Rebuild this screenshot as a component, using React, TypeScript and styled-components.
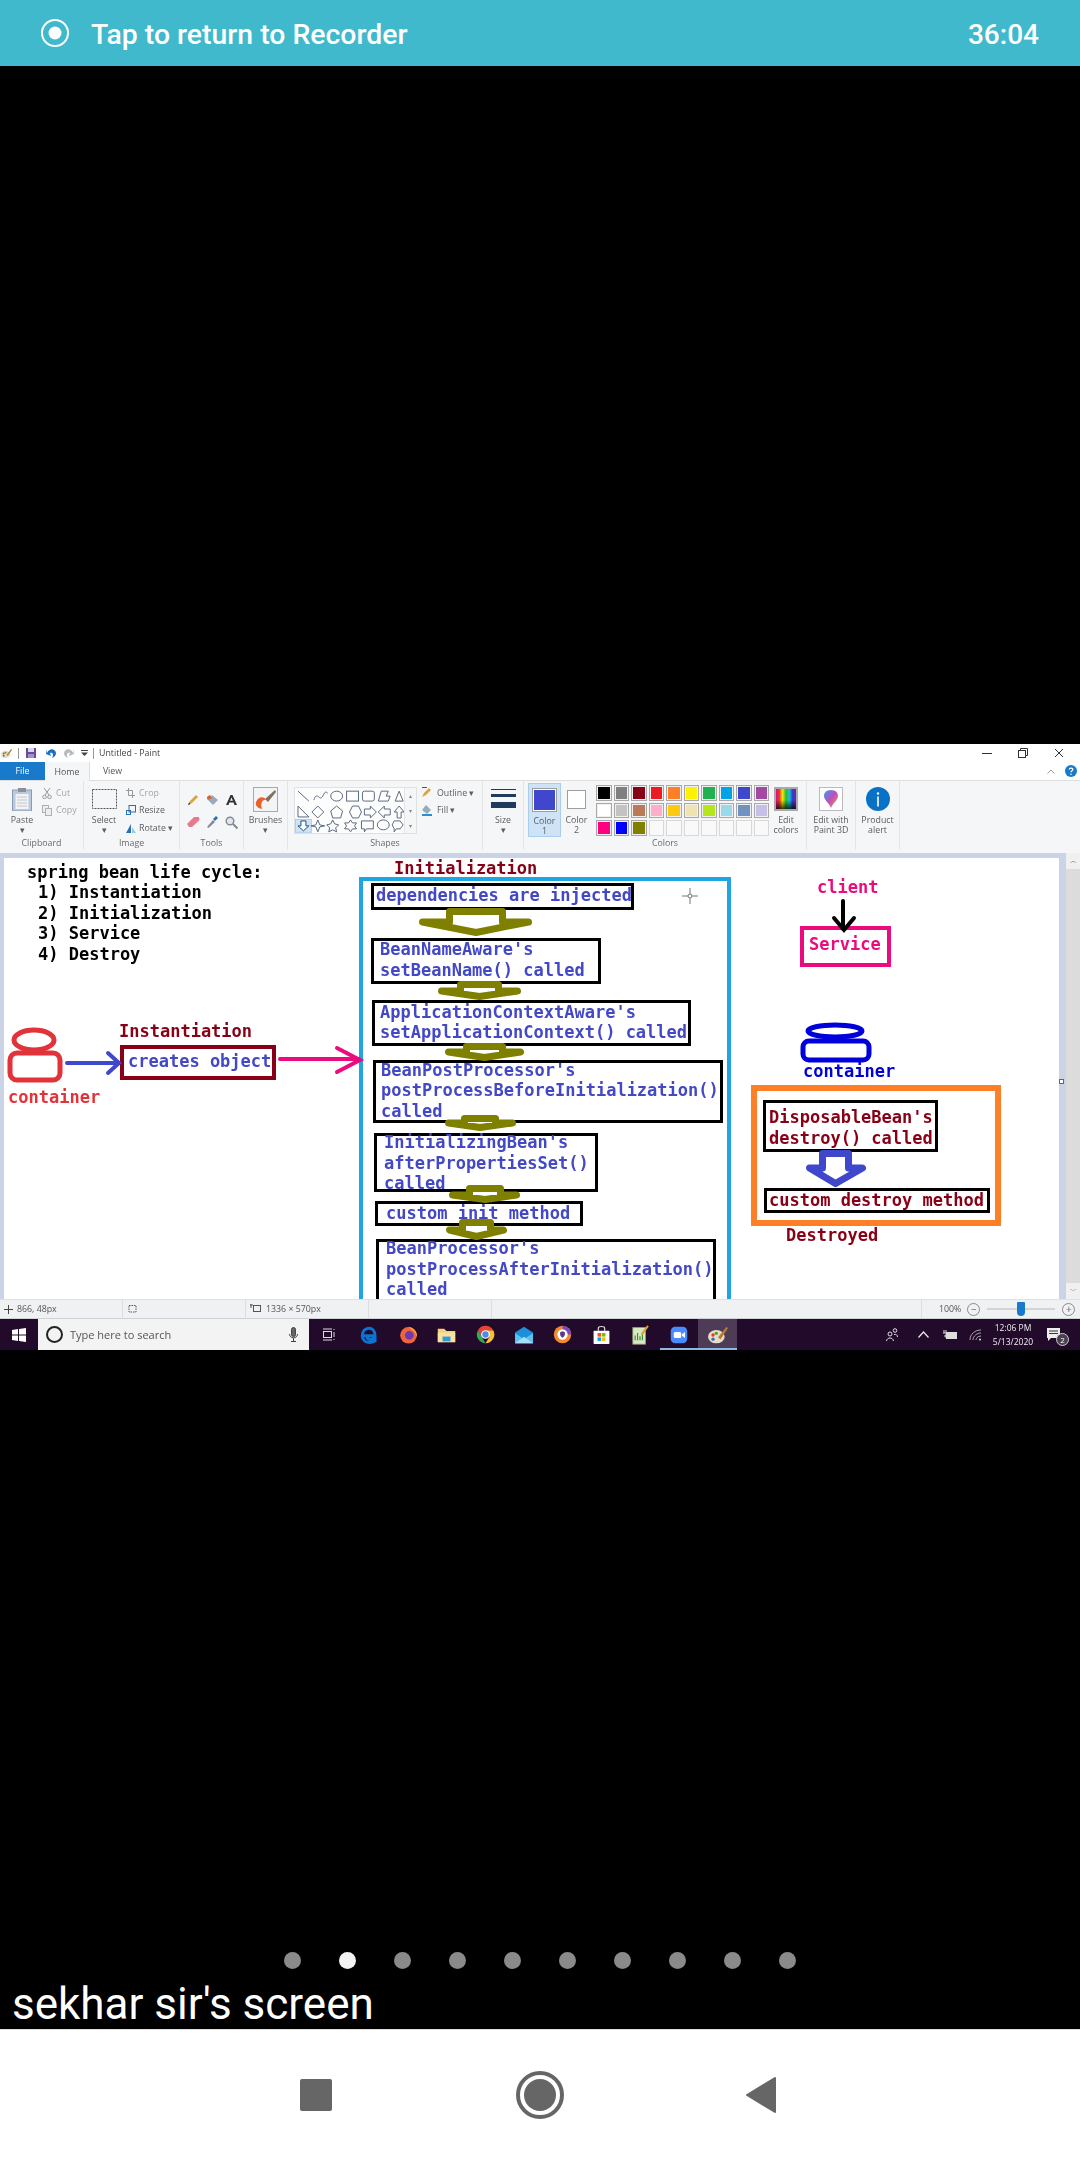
import React from "react";
import styled, { createGlobalStyle } from "styled-components";

const CX = 4;
const CY = 858;
const BLUE = "#4348c6";

const Global = createGlobalStyle`
  html, body { margin: 0; padding: 0; background: #000; }
  * { box-sizing: border-box; }
`;

const Page = styled.div`
  width: 1080px;
  height: 2160px;
  display: flex;
  flex-direction: column;
  background: #000;
  overflow: hidden;
  font-family: Roboto, "Liberation Sans", sans-serif;
`;

const RecorderBar = styled.div`
  height: 66px;
  flex: none;
  background: #3fb9cb;
  color: #fff;
  display: flex;
  align-items: center;
  padding: 0 41px;
  font-size: 28.4px;
  font-weight: 500;
`;
const RecorderText = styled.span`
  margin: 2px 0 0 22px;
  flex: 1;
`;
const RecorderTime = styled.span`
  margin-top: 2px;
  font-size: 28px;
`;
const VideoGap = styled.div`
  height: 678px;
  flex: none;
`;

const PaintWindow = styled.div`
  height: 606px;
  flex: none;
  display: flex;
  flex-direction: column;
  background: #fff;
  font-family: "Open Sans", "Liberation Sans", sans-serif;
  font-size: 8.8px;
  color: #5c5c5c;
  filter: blur(0.35px);
`;
const TitleBar = styled.div`
  height: 18px;
  display: flex;
  align-items: center;
  color: #444;
`;
const QuickSlot = styled.div<{ $w: number }>`
  width: ${(p) => p.$w}px;
  flex: none;
  display: flex;
  justify-content: center;
  align-items: center;
`;
const QuickSep = styled.div<{ $ml: number }>`
  width: 1px;
  height: 11px;
  background: #9a9a9a;
  flex: none;
  margin-left: ${(p) => p.$ml}px;
`;
const WindowTitle = styled.span`
  margin-left: 5px;
  flex: 1;
`;
const WindowControls = styled.div`
  display: flex;
  margin-right: 3px;
`;
const TabRow = styled.div`
  height: 19px;
  display: flex;
  align-items: stretch;
  border-bottom: 1px solid #dcdee1;
  position: relative;
`;
const Tab = styled.div<{ $kind: "file" | "active" | "plain" }>`
  width: 45px;
  display: flex;
  align-items: center;
  justify-content: center;
  background: ${(p) => (p.$kind === "file" ? "#1979ca" : p.$kind === "active" ? "#f5f6f7" : "transparent")};
  color: ${(p) => (p.$kind === "file" ? "#fff" : "#555")};
  border-right: ${(p) => (p.$kind === "active" ? "1px solid #dcdee1" : "none")};
  margin-bottom: ${(p) => (p.$kind === "active" ? "-1px" : "0")};
`;
const TabHelp = styled.div`
  margin-left: auto;
  display: flex;
  align-items: center;
  gap: 10px;
  padding-right: 3px;
`;

const Ribbon = styled.div`
  height: 72px;
  display: flex;
  background: #f5f6f7;
`;
const RibbonGroup = styled.div<{ $w: number }>`
  width: ${(p) => p.$w}px;
  flex: none;
  display: flex;
  flex-direction: column;
  border-right: 1px solid #e4e5e8;
  margin-bottom: 3px;
`;
const GroupBody = styled.div`
  flex: 1;
  display: flex;
  align-items: flex-start;
  min-height: 0;
`;
const GroupCaption = styled.div`
  height: 12px;
  line-height: 11px;
  text-align: center;
  color: #6a6a6a;
`;
const LargeTool = styled.div<{ $w: number; $ml?: number }>`
  width: ${(p) => p.$w}px;
  margin-left: ${(p) => p.$ml ?? 0}px;
  flex: none;
  display: flex;
  flex-direction: column;
  align-items: center;
  padding-top: 5px;
  line-height: 10px;
  text-align: center;
`;
const ToolIcon = styled.div`
  height: 26px;
  margin-bottom: 3px;
  display: flex;
  align-items: center;
  justify-content: center;
`;
const SmallStack = styled.div<{ $ml: number }>`
  margin-left: ${(p) => p.$ml}px;
  padding-top: 3px;
  display: flex;
  flex-direction: column;
`;
const SmallTool = styled.div<{ $gap: number; $muted?: boolean }>`
  height: 17.5px;
  display: flex;
  align-items: center;
  gap: ${(p) => p.$gap}px;
  white-space: nowrap;
  color: ${(p) => (p.$muted ? "#a5a5a5" : "#5c5c5c")};
`;
const ToolGrid = styled.div`
  display: grid;
  grid-template-columns: repeat(3, 19px);
  grid-auto-rows: 22px;
  margin: 8px 0 0 3.5px;
  place-items: center;
`;
const Gallery = styled.div`
  width: 123px;
  height: 47px;
  margin: 6px 0 0 6px;
  border: 1px solid #dfe1e4;
  background: #fdfdfd;
  flex: none;
  display: flex;
`;
const GalleryScroll = styled.div`
  width: 12px;
  margin-left: auto;
  border-left: 1px solid #e4e5e8;
  background: #f5f6f7;
  display: flex;
  flex-direction: column;
  justify-content: space-around;
  align-items: center;
  font-size: 6px;
  color: #888;
`;
const ColorButton = styled(LargeTool) <{ $on?: boolean }>`
  margin-top: ${(p) => (p.$on ? "2px" : "0")};
  padding-top: ${(p) => (p.$on ? "3px" : "5px")};
  height: ${(p) => (p.$on ? "54px" : "auto")};
  background: ${(p) => (p.$on ? "#cfe3f7" : "transparent")};
  border: ${(p) => (p.$on ? "1px solid #a9cdee" : "none")};
`;
const Swatch = styled.div<{ $c: string; $w: number; $h: number }>`
  width: ${(p) => p.$w}px;
  height: ${(p) => p.$h}px;
  background: ${(p) => p.$c};
  border: 1px solid #9d9d9d;
  box-shadow: inset 0 0 0 1px #fff;
`;
const Palette = styled.div`
  margin: 4px 2px 0 7px;
  display: grid;
  grid-template-columns: repeat(10, 15.5px);
  grid-auto-rows: 15.5px;
  gap: 2px;
  flex: none;
`;
const PaletteCell = styled.div<{ $c?: string }>`
  background: ${(p) => p.$c ?? "#f9f9f9"};
  border: 1px solid ${(p) => (p.$c ? "#a8a8a8" : "#d8d8d8")};
  box-shadow: inset 0 0 0 1px ${(p) => (p.$c ? "#f0f0f0" : "transparent")};
`;
const RainbowTile = styled.div`
  width: 24px;
  height: 24px;
  border: 2px solid #aaa;
  background:
    linear-gradient(to bottom, rgba(0, 0, 0, 0) 55%, rgba(0, 0, 0, 0.75)),
    linear-gradient(to right, #d3157a, #e33, #ee0, #2b3, #2bd, #24c, #91a);
`;
const PictureTile = styled.div`
  width: 24px;
  height: 24px;
  background: #fff;
  border: 1px solid #bbb;
  display: flex;
  align-items: center;
  justify-content: center;
`;

const Workspace = styled.div`
  height: 446px;
  flex: none;
  display: flex;
  background: #cbd4e6;
  padding: 5px 0 0 4px;
  position: relative;
`;
const Canvas = styled.div`
  width: 1055px;
  height: 441px;
  flex: none;
  background: #fff;
  position: relative;
  overflow: hidden;
  font-family: "DejaVu Sans Mono", "Liberation Mono", monospace;
  font-size: 17px;
  font-weight: 700;
  line-height: 20.5px;
  white-space: pre;
`;
const Scrollbar = styled.div`
  width: 14px;
  margin: -5px 0 0 7px;
  flex: none;
  background: #dcdcdc;
  display: flex;
  flex-direction: column;
  justify-content: space-between;
  align-items: center;
  font-size: 7px;
  color: #555;
`;
const ScrollCap = styled.div`
  height: 16px;
  width: 100%;
  background: #f0f0f0;
  display: flex;
  align-items: center;
  justify-content: center;
`;
const ResizeHandle = styled.div`
  position: absolute;
  left: 1059px;
  top: 226px;
  width: 5px;
  height: 5px;
  background: #fff;
  border: 1px solid #666;
`;
const Label = styled.div<{ $x: number; $cy: number; $c: string }>`
  position: absolute;
  left: ${(p) => p.$x - CX}px;
  top: ${(p) => p.$cy - CY - 10.25}px;
  color: ${(p) => p.$c};
`;
const Box = styled.div<{
  $x: number; $y: number; $w: number; $h: number; $b: number; $bc: string; $c?: string; $pad?: number; $pb?: number; $pt?: number; $open?: boolean;
}>`
  position: absolute;
  left: ${(p) => p.$x - CX}px;
  top: ${(p) => p.$y - CY}px;
  width: ${(p) => p.$w}px;
  height: ${(p) => p.$h}px;
  border: ${(p) => p.$b}px solid ${(p) => p.$bc};
  border-bottom-width: ${(p) => (p.$open ? 0 : p.$b)}px;
  color: ${(p) => p.$c ?? BLUE};
  padding: ${(p) => p.$pt ?? 0}px 0 ${(p) => p.$pb ?? 0}px ${(p) => p.$pad ?? 0}px;
  display: flex;
  align-items: center;
`;
const Ink = styled.svg`
  position: absolute;
  left: 0;
  top: 0;
  width: 1055px;
  height: 441px;
  pointer-events: none;
`;

const StatusBar = styled.div`
  height: 20px;
  flex: none;
  display: flex;
  background: #f0f1f3;
  border-top: 1px solid #dfe1e5;
  border-bottom: 1px solid #cfd2d8;
`;
const StatusCell = styled.div<{ $w?: number }>`
  width: ${(p) => (p.$w ? `${p.$w}px` : "auto")};
  flex: ${(p) => (p.$w ? "none" : 1)};
  border-right: 1px solid #dcdee2;
  display: flex;
  align-items: center;
  gap: 4px;
  padding-left: 4px;
  color: #555;
  white-space: nowrap;
`;
const ZoomCell = styled.div`
  flex: 1;
  display: flex;
  align-items: center;
  padding-left: 17px;
  color: #555;
`;
const ZoomTrack = styled.div`
  width: 68px;
  height: 2px;
  background: #d4d4d4;
  margin: 0 7px 0 7px;
  position: relative;
`;
const ZoomThumb = styled.div`
  position: absolute;
  left: 30px;
  top: -6px;
  width: 8px;
  height: 14px;
  background: #1979ca;
  border-radius: 1px 1px 4px 4px;
`;
const RoundBtn = styled.div<{ $ml?: number }>`
  width: 13px;
  height: 13px;
  margin-left: ${(p) => p.$ml ?? 0}px;
  border: 1px solid #8a8a8a;
  border-radius: 50%;
  display: flex;
  align-items: center;
  justify-content: center;
  font-size: 10px;
  line-height: 10px;
  color: #666;
`;

const Taskbar = styled.div`
  height: 31px;
  flex: none;
  background: #220a2b;
  display: flex;
  align-items: stretch;
  color: #eee;
`;
const StartSlot = styled.div`
  width: 38px;
  flex: none;
  display: flex;
  align-items: center;
  justify-content: center;
`;
const SearchBox = styled.div`
  width: 271px;
  flex: none;
  background: #f3f3f3;
  display: flex;
  align-items: center;
  padding-left: 8px;
  color: #555;
  font-size: 11px;
`;
const SearchRing = styled.div`
  width: 17px;
  height: 17px;
  border: 2.5px solid #222;
  border-radius: 50%;
  margin-right: 7px;
  flex: none;
`;
const SearchMic = styled.div`
  margin-left: auto;
  margin-right: 11px;
  display: flex;
`;
const TaskSlot = styled.div<{ $w?: number; $open?: boolean; $active?: boolean }>`
  width: ${(p) => p.$w ?? 38.7}px;
  flex: none;
  display: flex;
  align-items: center;
  justify-content: center;
  background: ${(p) => (p.$active ? "rgba(255,255,255,.2)" : "transparent")};
  border-bottom: 2px solid ${(p) => (p.$open ? "#8fb7df" : "transparent")};
  border-top: 2px solid transparent;
`;
const Tray = styled.div`
  margin-left: auto;
  display: flex;
  width: 204px;
  flex: none;
`;
const Clock = styled.div`
  width: 46px;
  flex: none;
  display: flex;
  flex-direction: column;
  justify-content: center;
  align-items: center;
  font-size: 8.5px;
  line-height: 14px;
  white-space: nowrap;
`;
const NotifySlot = styled.div`
  width: 36px;
  flex: none;
  position: relative;
  display: flex;
  align-items: center;
  justify-content: center;
`;
const NotifyBadge = styled.div`
  position: absolute;
  left: 20px;
  top: 14px;
  width: 13px;
  height: 13px;
  border-radius: 50%;
  background: #4a4150;
  border: 1px solid #ccc;
  font-size: 8px;
  line-height: 11px;
  text-align: center;
  color: #fff;
`;

const Lower = styled.div`
  height: 680px;
  flex: none;
  display: flex;
  flex-direction: column;
  justify-content: flex-end;
  border-bottom: 1px solid #ddd;
`;
const Dots = styled.div`
  display: flex;
  justify-content: center;
  gap: 38px;
  margin-bottom: 10px;
  padding-right: 1px;
`;
const Dot = styled.div<{ $on?: boolean }>`
  width: 17px;
  height: 17px;
  border-radius: 50%;
  background: ${(p) => (p.$on ? "#f3f3f3" : "#8a8a8a")};
`;
const Caption = styled.div`
  color: #fff;
  font-size: 44px;
  line-height: 50px;
  padding: 0 0 0 12px;
`;
const NavBar = styled.div`
  flex: 1;
  background: #fff;
  display: flex;
  align-items: center;
  padding: 0 0 0 300px;
`;
const NavSquare = styled.div`
  width: 32px;
  height: 32px;
  background: #666;
  border-radius: 2px;
`;
const NavHome = styled.div`
  width: 48px;
  height: 48px;
  margin-left: 184px;
  border-radius: 50%;
  border: 4px solid #666;
  padding: 4px;
`;
const NavHomeCore = styled.div`
  width: 100%;
  height: 100%;
  border-radius: 50%;
  background: #666;
`;
const NavBack = styled.svg`
  margin-left: 181px;
  width: 32px;
  height: 38px;
`;

const PaletteIcon = ({ s = 12 }: { s?: number }) => (
  <svg width={s} height={s} viewBox="0 0 24 24">
    <ellipse cx="10" cy="14" rx="10" ry="8" fill="#e8dcc4" />
    <circle cx="6" cy="12" r="2" fill="#e33" />
    <circle cx="10" cy="10" r="2" fill="#3a3" />
    <circle cx="6" cy="17" r="2" fill="#36c" />
    <path d="M12 15 L22 2 L24 4 L15 17Z" fill="#b7772e" />
  </svg>
);

const arrows: [number, number, number, number, number, number, number, string, number][] = [
  [419, 532, 908, 922, 936, 446, 506, "#808000", 7],
  [438, 521, 981, 991, 1000, 457, 502, "#808000", 7],
  [445, 524, 1043, 1052, 1061, 463, 506, "#808000", 7],
  [445, 516, 1115, 1123, 1131, 461, 499, "#808000", 7],
  [449, 520, 1185, 1195, 1203, 466, 504, "#808000", 7],
  [446, 507, 1219, 1230, 1240, 459, 494, "#808000", 7],
  [806, 866, 1150, 1168, 1187, 819, 852, "#3f48cc", 7],
];

const arrowPath = (a: (typeof arrows)[number]) => {
  const [l, r, t, m, tip, sl, sr, , w] = a;
  const h = w / 2;
  const cx = (sl + sr) / 2;
  return `M${sl + h} ${t + h} L${sl + h} ${m} L${l + h} ${m} L${cx} ${tip - h} L${r - h} ${m} L${sr - h} ${m} L${sr - h} ${t + h}Z`;
};

const Diagram = () => (
  <Ink viewBox={`${CX} ${CY} 1055 441`}>
    {arrows.map((a, i) => (
      <path key={i} d={arrowPath(a)} fill="#fff" stroke={a[7]} strokeWidth={a[8]} strokeLinejoin="round" />
    ))}
    <g fill="none" stroke="#e2333a" strokeWidth="5">
      <ellipse cx="34" cy="1040" rx="20" ry="10" />
      <rect x="10" y="1053" width="50" height="27" rx="7" />
    </g>
    <g fill="none" stroke="#3f48cc" strokeWidth="4" strokeLinecap="round">
      <path d="M67 1063H118M108 1053L119 1063L108 1073" />
    </g>
    <g fill="none" stroke="#ec0a7f" strokeWidth="4" strokeLinecap="round">
      <path d="M280 1059H359M337 1048L360 1060L337 1072" />
    </g>
    <g fill="none" stroke="#000" strokeWidth="4" strokeLinecap="round">
      <path d="M843 901V929M834 918L844 930L854 918" />
    </g>
    <g fill="none" stroke="#0000dc" strokeWidth="5">
      <ellipse cx="835" cy="1031" rx="27" ry="6" />
      <rect x="803" y="1041" width="66" height="19" rx="6" />
    </g>
    <g fill="none" stroke="#777" strokeWidth="1">
      <path d="M682 896H698M690 888V904" />
      <circle cx="690" cy="896" r="2" fill="#fff" />
    </g>
  </Ink>
);

const ShapesArt = () => (
  <svg width="110" height="45" viewBox="0 0 110 45" fill="none" stroke="#5a6a80" strokeWidth="1">
    <path d="M3 3L14 13" />
    <path d="M19 12C22 2 25 14 28 8S31 4 33 5" />
    <ellipse cx="42" cy="8" rx="6" ry="5" />
    <rect x="52" y="3" width="12" height="10" />
    <rect x="68" y="3" width="12" height="10" rx="2" />
    <path d="M84 13L87 3H94L92 8H96L94 13Z" />
    <path d="M101 13L105 3L109 13Z" />
    <path d="M3 18V29H14Z" />
    <path d="M23 18L29 24L23 30L17 24Z" />
    <path d="M42 18L48 23L46 30H38L36 23Z" />
    <path d="M55 24L58 18H64L67 24L64 30H58Z" />
    <path d="M70 21H76V18L82 24L76 30V27H70Z" />
    <path d="M96 21H90V18L84 24L90 30V27H96Z" />
    <path d="M105 18L110 24H107V30H103V24H100Z" />
    <rect x="0.5" y="31.5" width="16" height="13" fill="#cfe3f7" stroke="#a9cdee" />
    <path d="M6 33H11V38H14L8.5 43L3 38H6Z" stroke="#1c4e80" fill="#fff" />
    <path d="M23 32L25 37L30 38L25 39L23 44L21 39L16 38L21 37Z" />
    <path d="M38 32L40 36L44 37L41 40L42 44L38 42L34 44L35 40L32 37L36 36Z" />
    <path d="M56 32L58 35H62L60 38L62 41H58L56 44L54 41H50L52 38L50 35H54Z" />
    <path d="M67 33H79V41H72L70 44V41H67Z" />
    <ellipse cx="89" cy="37" rx="6" ry="5" />
    <path d="M100 33H106L109 37L106 41H102L100 44V41L98 37Z" />
  </svg>
);

const swatches = [
  "#000000", "#7f7f7f", "#880015", "#ed1c24", "#ff7f27", "#fff200", "#22b14c", "#00a2e8", "#3f48cc", "#a349a4",
  "#ffffff", "#c3c3c3", "#b97a57", "#ffaec9", "#ffc90e", "#efe4b0", "#b5e61d", "#99d9ea", "#7092be", "#c8bfe7",
  "#ff0080", "#0000ff", "#808000", "", "", "", "", "", "", "",
];

const taskIcons: React.ReactNode[] = [
  <svg key="edge" width="18" height="18" viewBox="0 0 24 24" fill="none">
    <path d="M4 13H20C20 6 16 3 12 3C7 3 3 7 3 13C3 19 8 22 13 22C16 22 18 21 20 20V16C17 18 9 20 9 13" stroke="#0b73d0" strokeWidth="4" />
  </svg>,
  <svg key="ff" width="19" height="19" viewBox="0 0 24 24">
    <circle cx="12" cy="13" r="10.5" fill="#f0643c" />
    <path d="M12 2C20 5 24 10 22 15C21 7 15 6 12 2Z" fill="#fbb03b" />
    <circle cx="13" cy="13" r="5.5" fill="#6d3ab0" />
  </svg>,
  <svg key="folder" width="19" height="18" viewBox="0 0 24 22">
    <path d="M1 3H9L12 6H23V20H1Z" fill="#f3d279" />
    <path d="M1 8H23V20H1Z" fill="#f8e2a0" />
    <rect x="7" y="13" width="10" height="6" fill="#2f9bd8" />
  </svg>,
  <svg key="chrome" width="19" height="19" viewBox="0 0 24 24">
    <path d="M12 1A11 11 0 0 1 22 7H12Z" fill="#e54335" />
    <path d="M2.5 6.5A11 11 0 0 1 12 1L22 7H12L7 16Z" fill="#e54335" />
    <path d="M2.5 6.5L7.5 15L12 23A11 11 0 0 1 2.5 6.5Z" fill="#34a853" />
    <path d="M22 7A11 11 0 0 1 12 23L17 15L12 7Z" fill="#fbc02d" />
    <circle cx="12" cy="12" r="5.5" fill="#fff" />
    <circle cx="12" cy="12" r="4" fill="#4a8af4" />
  </svg>,
  <svg key="mail" width="20" height="18" viewBox="0 0 24 22">
    <path d="M1 8L12 1L23 8V21H1Z" fill="#1c8fd8" />
    <path d="M1 9L12 16L23 9V21H1Z" fill="#5cc1ee" />
    <path d="M1 21L12 13L23 21Z" fill="#a4e0f7" />
  </svg>,
  <svg key="vpn" width="19" height="19" viewBox="0 0 24 24">
    <circle cx="12" cy="12" r="11" fill="#f08a2c" />
    <path d="M12 1A11 11 0 0 1 23 12H12Z" fill="#7a48c8" />
    <circle cx="12" cy="12" r="6.5" fill="#fff" />
    <path d="M12 8L15 9V12C15 14 13 15.5 12 16C11 15.5 9 14 9 12V9Z" fill="#5a3a90" />
  </svg>,
  <svg key="store" width="19" height="20" viewBox="0 0 24 25" fill="none">
    <path d="M8 7V4C8 1 16 1 16 4V7" stroke="#ddd" strokeWidth="1.5" />
    <rect x="2" y="7" width="20" height="17" rx="1" fill="#fff" />
    <rect x="7" y="10" width="4.5" height="4.5" fill="#f25022" />
    <rect x="12.5" y="10" width="4.5" height="4.5" fill="#7fba00" />
    <rect x="7" y="15.5" width="4.5" height="4.5" fill="#00a4ef" />
    <rect x="12.5" y="15.5" width="4.5" height="4.5" fill="#ffb900" />
  </svg>,
  <svg key="sheet" width="18" height="20" viewBox="0 0 22 25" fill="none">
    <rect x="2" y="3" width="16" height="21" fill="#d9e8c0" stroke="#8a9a70" />
    <path d="M5 19V13M8 19V10M11 19V14M14 19V11" stroke="#2e8b3d" strokeWidth="1.4" />
    <path d="M13 12L21 1" stroke="#d7a32c" strokeWidth="2.5" />
  </svg>,
  <svg key="zoom" width="18" height="18" viewBox="0 0 24 24">
    <rect x="1" y="1" width="22" height="22" rx="6" fill="#4a8cff" />
    <rect x="5" y="8" width="10" height="8" rx="2" fill="#fff" />
    <path d="M16 11L20 8V16L16 13Z" fill="#fff" />
  </svg>,
  <PaletteIcon key="paint" s={20} />,
];

export default function App() {
  return (
    <Page>
      <Global />
      <RecorderBar>
        <svg width="28" height="28" viewBox="0 0 28 28">
          <circle cx="14" cy="14" r="13" fill="none" stroke="#fff" strokeWidth="2" />
          <circle cx="14" cy="14" r="6.5" fill="#fff" />
        </svg>
        <RecorderText>Tap to return to Recorder</RecorderText>
        <RecorderTime>36:04</RecorderTime>
      </RecorderBar>
      <VideoGap />
      <PaintWindow>
        <TitleBar>
          <QuickSlot $w={13}><PaletteIcon s={11} /></QuickSlot>
          <QuickSep $ml={5} />
          <QuickSlot $w={24}>
            <svg width="10" height="10" viewBox="0 0 10 10"><rect width="10" height="10" fill="#6a4a9c" /><rect x="2" y="0" width="6" height="4" fill="#dcd6ea" /><rect x="2" y="6" width="6" height="4" fill="#a090c4" /></svg>
          </QuickSlot>
          <QuickSlot $w={17}>
            <svg width="11" height="10" viewBox="0 0 11 10" fill="none"><path d="M1 5C3 0 9 0 10 5C10 8 8 9 6 10C8 7 7 4 4 5L5 8L0 6L1 1Z" fill="#1b6fc4" /></svg>
          </QuickSlot>
          <QuickSlot $w={17}>
            <svg width="11" height="10" viewBox="0 0 11 10" fill="none"><path d="M10 5C8 0 2 0 1 5C1 8 3 9 5 10C3 7 4 4 7 5L6 8L11 6L10 1Z" fill="#b5bac0" /></svg>
          </QuickSlot>
          <QuickSlot $w={14}>
            <svg width="7" height="6" viewBox="0 0 7 6"><path d="M0 0H7V1H0ZM0 2.5H7L3.5 6Z" fill="#444" /></svg>
          </QuickSlot>
          <QuickSep $ml={2} />
          <WindowTitle>Untitled - Paint</WindowTitle>
          <WindowControls>
            <QuickSlot $w={36}><svg width="10" height="10" viewBox="0 0 10 10"><path d="M0 5.5H10" stroke="#333" /></svg></QuickSlot>
            <QuickSlot $w={36}><svg width="10" height="10" viewBox="0 0 10 10" fill="none" stroke="#333"><rect x="0.5" y="2.5" width="7" height="7" /><path d="M2.5 2.5V0.5H9.5V7.5H7.5" /></svg></QuickSlot>
            <QuickSlot $w={36}><svg width="10" height="10" viewBox="0 0 10 10"><path d="M1 1L9 9M9 1L1 9" stroke="#333" /></svg></QuickSlot>
          </WindowControls>
        </TitleBar>
        <TabRow>
          <Tab $kind="file">File</Tab>
          <Tab $kind="active">Home</Tab>
          <Tab $kind="plain">View</Tab>
          <TabHelp>
            <svg width="8" height="5" viewBox="0 0 8 5"><path d="M0.5 4.5L4 1L7.5 4.5" fill="none" stroke="#999" /></svg>
            <svg width="12" height="12" viewBox="0 0 12 12"><circle cx="6" cy="6" r="6" fill="#1979ca" /><path d="M4.2 4.5C4.5 2.7 8 2.8 7.8 4.7C7.7 5.8 6 5.8 6 7.3" fill="none" stroke="#fff" strokeWidth="1.3" /><circle cx="6" cy="9.2" r="0.8" fill="#fff" /></svg>
          </TabHelp>
        </TabRow>
        <Ribbon>
          <RibbonGroup $w={84}>
            <GroupBody>
              <LargeTool $w={38} $ml={3}>
                <ToolIcon>
                  <svg width="20" height="23" viewBox="0 0 20 23"><rect x="0.5" y="2" width="19" height="21" fill="#b9c9de" stroke="#8a9ab0" /><rect x="3.5" y="6" width="13" height="15" fill="#f2f2f2" /><rect x="6" y="0" width="8" height="4" fill="#8a8f98" /><path d="M5 9H15M5 12H15M5 15H15M5 18H15" stroke="#c0c8d4" /></svg>
                </ToolIcon>
                Paste
                <span>▾</span>
              </LargeTool>
              <SmallStack $ml={1}>
                <SmallTool $gap={4} $muted>
                  <svg width="10" height="12" viewBox="0 0 10 12" fill="none" stroke="#9a9a9a"><path d="M2 1L7 8M8 1L3 8" /><circle cx="2.5" cy="10" r="1.8" /><circle cx="7.5" cy="10" r="1.8" /></svg>
                  Cut
                </SmallTool>
                <SmallTool $gap={4} $muted>
                  <svg width="10" height="11" viewBox="0 0 10 11" fill="#eee" stroke="#b0b0b0"><rect x="0.5" y="0.5" width="6" height="7" /><rect x="3.5" y="3.5" width="6" height="7" /></svg>
                  Copy
                </SmallTool>
              </SmallStack>
            </GroupBody>
            <GroupCaption>Clipboard</GroupCaption>
          </RibbonGroup>
          <RibbonGroup $w={96}>
            <GroupBody>
              <LargeTool $w={32} $ml={4}>
                <ToolIcon>
                  <svg width="25" height="20" viewBox="0 0 25 20"><rect x="0.5" y="0.5" width="24" height="19" fill="none" stroke="#555" strokeDasharray="2 1" /></svg>
                </ToolIcon>
                Select
                <span>▾</span>
              </LargeTool>
              <SmallStack $ml={6}>
                <SmallTool $gap={4} $muted>
                  <svg width="9" height="10" viewBox="0 0 9 10" fill="none" stroke="#999"><path d="M2.5 0V7.5H9M0 2.5H6.5V10" /></svg>
                  Crop
                </SmallTool>
                <SmallTool $gap={3}>
                  <svg width="10" height="10" viewBox="0 0 10 10" fill="none" stroke="#2a6fb4"><rect x="3" y="0.5" width="6.5" height="6.5" /><rect x="0.5" y="5.5" width="4" height="4" /></svg>
                  Resize
                </SmallTool>
                <SmallTool $gap={3}>
                  <svg width="10" height="10" viewBox="0 0 10 10"><path d="M5 1V10H0Z" fill="#2a6fb4" /><path d="M6 4L10 10H6Z" fill="#9cc" /></svg>
                  Rotate ▾
                </SmallTool>
              </SmallStack>
            </GroupBody>
            <GroupCaption>Image</GroupCaption>
          </RibbonGroup>
          <RibbonGroup $w={64}>
            <GroupBody>
              <ToolGrid>
                <svg width="12" height="12" viewBox="0 0 12 12"><path d="M1 11L3 7L9 1L11 3L5 9Z" fill="#e0a040" /><path d="M1 11L2 8.5L3.5 10Z" fill="#333" /></svg>
                <svg width="13" height="12" viewBox="0 0 13 12"><path d="M6 1L12 6L7 11L2 6Z" fill="#9ab" /><path d="M2 6C0 4 1 2 4 1L6 4Z" fill="#d4623a" /></svg>
                <svg width="13" height="12" viewBox="0 0 13 12"><path d="M5.5 1H7.5L12 11H9.5L8.6 8.5H4.4L3.5 11H1ZM6.5 3.5L5.1 6.8H7.9Z" fill="#333" /></svg>
                <svg width="14" height="12" viewBox="0 0 14 12"><path d="M1 8L8 1H13L13.5 4L6 11H3Z" fill="#e8788c" /></svg>
                <svg width="12" height="12" viewBox="0 0 12 12"><path d="M1 11L7 4L9 6L2.5 12Z" fill="#889" /><path d="M7 3L10 0L12 2L9 5Z" fill="#2a6fb4" /></svg>
                <svg width="13" height="13" viewBox="0 0 13 13" fill="none" stroke="#888" strokeWidth="1.4"><circle cx="5" cy="5" r="3.8" fill="#dce8f4" /><path d="M8 8L12.5 12.5" strokeWidth="2" /></svg>
              </ToolGrid>
            </GroupBody>
            <GroupCaption>Tools</GroupCaption>
          </RibbonGroup>
          <RibbonGroup $w={44}>
            <GroupBody>
              <LargeTool $w={43}>
                <ToolIcon>
                  <svg width="25" height="25" viewBox="0 0 25 25"><rect x="0.5" y="0.5" width="24" height="24" fill="#f4f4f4" stroke="#aaa" /><path d="M3 15C6 8 12 10 13 13C10 12 7 16 9 22C4 21 2 18 3 15Z" fill="#e8622a" /><path d="M12 12L22 3L23 5L15 15Z" fill="#807060" /></svg>
                </ToolIcon>
                Brushes
                <span>▾</span>
              </LargeTool>
            </GroupBody>
            <GroupCaption />
          </RibbonGroup>
          <RibbonGroup $w={195}>
            <GroupBody>
              <Gallery>
                <ShapesArt />
                <GalleryScroll><span>▴</span><span>▾</span><span>▾</span></GalleryScroll>
              </Gallery>
              <SmallStack $ml={5}>
                <SmallTool $gap={5}>
                  <svg width="10" height="11" viewBox="0 0 10 11"><path d="M0 10L2 6L7 1L9 3L4 8Z" fill="#e0a040" /><rect x="0" y="0" width="5" height="1" fill="#555" /></svg>
                  Outline ▾
                </SmallTool>
                <SmallTool $gap={5}>
                  <svg width="10" height="11" viewBox="0 0 10 11"><path d="M4 0L9 5L5 9L0 5Z" fill="#9ab" /><rect y="9" width="10" height="2" fill="#2a8fd0" /></svg>
                  Fill ▾
                </SmallTool>
              </SmallStack>
            </GroupBody>
            <GroupCaption>Shapes</GroupCaption>
          </RibbonGroup>
          <RibbonGroup $w={41}>
            <GroupBody>
              <LargeTool $w={40}>
                <ToolIcon>
                  <svg width="25" height="22" viewBox="0 0 25 22"><rect y="1" width="25" height="1" fill="#1f3a5c" /><rect y="6" width="25" height="3" fill="#1f3a5c" /><rect y="14" width="25" height="6" fill="#1f3a5c" /></svg>
                </ToolIcon>
                Size
                <span>▾</span>
              </LargeTool>
            </GroupBody>
            <GroupCaption />
          </RibbonGroup>
          <RibbonGroup $w={283}>
            <GroupBody>
              <ColorButton $w={33} $ml={4} $on>
                <ToolIcon><Swatch $c="#3f48cc" $w={25} $h={24} /></ToolIcon>
                Color
                <span>1</span>
              </ColorButton>
              <ColorButton $w={25} $ml={3}>
                <ToolIcon><Swatch $c="#ffffff" $w={19} $h={19} /></ToolIcon>
                Color
                <span>2</span>
              </ColorButton>
              <Palette>
                {swatches.map((c, i) => (
                  <PaletteCell key={i} $c={c || undefined} />
                ))}
              </Palette>
              <LargeTool $w={30}>
                <ToolIcon><RainbowTile /></ToolIcon>
                Edit
                <span>colors</span>
              </LargeTool>
            </GroupBody>
            <GroupCaption>Colors</GroupCaption>
          </RibbonGroup>
          <RibbonGroup $w={49}>
            <GroupBody>
              <LargeTool $w={48}>
                <ToolIcon>
                  <PictureTile>
                    <svg width="14" height="18" viewBox="0 0 14 18"><defs><linearGradient id="b" x1="0" y1="0" x2="1" y2="1"><stop offset="0" stopColor="#3aa0e8" /><stop offset=".5" stopColor="#c04fc0" /><stop offset="1" stopColor="#f0a030" /></linearGradient></defs><path d="M7 0C12 0 14 3 14 6C14 10 9 13 7 18C5 13 0 10 0 6C0 3 2 0 7 0Z" fill="url(#b)" /></svg>
                  </PictureTile>
                </ToolIcon>
                Edit with
                <span>Paint 3D</span>
              </LargeTool>
            </GroupBody>
            <GroupCaption />
          </RibbonGroup>
          <RibbonGroup $w={44}>
            <GroupBody>
              <LargeTool $w={43}>
                <ToolIcon>
                  <svg width="24" height="24" viewBox="0 0 24 24"><circle cx="12" cy="12" r="12" fill="#0a72c5" /><circle cx="12" cy="6.5" r="1.2" fill="#fff" /><rect x="11.2" y="9.5" width="1.6" height="10" fill="#fff" /></svg>
                </ToolIcon>
                Product
                <span>alert</span>
              </LargeTool>
            </GroupBody>
            <GroupCaption />
          </RibbonGroup>
        </Ribbon>
        <Workspace>
          <Canvas>
            <Label $x={27} $cy={872} $c="#000">spring bean life cycle:</Label>
            <Label $x={38} $cy={892} $c="#000">1) Instantiation</Label>
            <Label $x={38} $cy={913} $c="#000">2) Initialization</Label>
            <Label $x={38} $cy={933} $c="#000">3) Service</Label>
            <Label $x={38} $cy={954} $c="#000">4) Destroy</Label>

            <Label $x={8} $cy={1097} $c="#e2333a">container</Label>
            <Label $x={119} $cy={1031} $c="#880015">Instantiation</Label>
            <Box $x={120} $y={1045} $w={156} $h={35} $b={4} $bc="#880015" $pad={4} $pb={3}>creates object</Box>

            <Label $x={394} $cy={868} $c="#880015">Initialization</Label>
            <Box $x={359} $y={877} $w={372} $h={440} $b={4} $bc="#1fa6e0" />
            <Box $x={371} $y={883} $w={263} $h={27} $b={3} $bc="#000" $pad={2} $pb={2}>dependencies are injected</Box>
            <Box $x={371} $y={938} $w={230} $h={46} $b={3} $bc="#000" $pad={6} $pb={3}>{"BeanNameAware's\nsetBeanName() called"}</Box>
            <Box $x={372} $y={1000} $w={319} $h={46} $b={3} $bc="#000" $pad={5} $pb={2}>{"ApplicationContextAware's\nsetApplicationContext() called"}</Box>
            <Box $x={373} $y={1060} $w={350} $h={63} $b={3} $bc="#000" $pad={5} $pb={2}>{"BeanPostProcessor's\npostProcessBeforeInitialization()\ncalled"}</Box>
            <Box $x={374} $y={1133} $w={224} $h={59} $b={3} $bc="#000" $pad={7} $pt={1}>{"InitializingBean's\nafterPropertiesSet()\ncalled"}</Box>
            <Box $x={375} $y={1201} $w={208} $h={25} $b={3} $bc="#000" $pad={8}>custom init method</Box>
            <Box $x={376} $y={1239} $w={340} $h={60} $b={3} $bc="#000" $pad={7} $pb={3} $open>{"BeanProcessor's\npostProcessAfterInitialization()\ncalled"}</Box>

            <Label $x={817} $cy={887} $c="#ec0a7f">client</Label>
            <Box $x={800} $y={926} $w={91} $h={41} $b={4} $bc="#ec0a7f" $c="#ec0a7f" $pad={5} $pb={5}>Service</Box>
            <Label $x={803} $cy={1071} $c="#0000dc">container</Label>
            <Box $x={751} $y={1085} $w={250} $h={141} $b={6} $bc="#ff7f27" />
            <Box $x={763} $y={1100} $w={175} $h={52} $b={3} $bc="#000" $c="#880015" $pad={3} $pt={3}>{"DisposableBean's\ndestroy() called"}</Box>
            <Box $x={764} $y={1188} $w={226} $h={25} $b={3} $bc="#000" $c="#880015" $pad={2}>custom destroy method</Box>
            <Label $x={786} $cy={1235} $c="#880015">Destroyed</Label>
            <Diagram />
          </Canvas>
          <Scrollbar>
            <ScrollCap>︿</ScrollCap>
            <ScrollCap>﹀</ScrollCap>
          </Scrollbar>
          <ResizeHandle />
        </Workspace>
        <StatusBar>
          <StatusCell $w={123}>
            <svg width="9" height="9" viewBox="0 0 9 9"><path d="M4.5 0V9M0 4.5H9" stroke="#444" /></svg>
            866, 48px
          </StatusCell>
          <StatusCell $w={123}>
            <svg width="10" height="10" viewBox="0 0 10 10" fill="none" stroke="#555" strokeDasharray="1.5 1"><rect x="2" y="1.5" width="7" height="6.5" /></svg>
          </StatusCell>
          <StatusCell $w={123}>
            <svg width="12" height="10" viewBox="0 0 12 10" fill="none" stroke="#555"><path d="M1 0V4M0 1H3" /><rect x="3.5" y="1.5" width="7" height="6" /></svg>
            1336 × 570px
          </StatusCell>
          <StatusCell $w={123} />
          <StatusCell $w={430} />
          <ZoomCell>
            100%
            <RoundBtn $ml={6}>−</RoundBtn>
            <ZoomTrack><ZoomThumb /></ZoomTrack>
            <RoundBtn>+</RoundBtn>
          </ZoomCell>
        </StatusBar>
        <Taskbar>
          <StartSlot>
            <svg width="14" height="14" viewBox="0 0 14 14"><path d="M0 2L6 1V6.5H0ZM7 0.9L14 0V6.5H7ZM0 7.5H6V13L0 12ZM7 7.5H14V14L7 13.1Z" fill="#fff" /></svg>
          </StartSlot>
          <SearchBox>
            <SearchRing />
            Type here to search
            <SearchMic>
              <svg width="9" height="15" viewBox="0 0 9 15" fill="none" stroke="#444"><rect x="2.5" y="0.5" width="4" height="9" rx="2" fill="#666" /><path d="M0.5 7C0.5 12 8.5 12 8.5 7M4.5 11V15M2 14.5H7" /></svg>
            </SearchMic>
          </SearchBox>
          <TaskSlot $w={41}>
            <svg width="13" height="13" viewBox="0 0 13 13" fill="none" stroke="#ddd"><rect x="0.5" y="3.5" width="8" height="6" /><path d="M0 1H9M0 12H9M11 1V2M11 4V9M11 11V12" /></svg>
          </TaskSlot>
          {taskIcons.map((icon, i) => (
            <TaskSlot key={i} $open={i >= 8} $active={i === 9}>{icon}</TaskSlot>
          ))}
          <Tray>
            <TaskSlot $w={32}>
              <svg width="12" height="13" viewBox="0 0 12 13" fill="none" stroke="#ddd"><circle cx="4" cy="6" r="2" /><path d="M0.5 13C1 9 7 9 7.5 13" /><circle cx="9" cy="2.5" r="1.8" /><path d="M8 6.5C10 6 11.5 7 11.5 9" /></svg>
            </TaskSlot>
            <TaskSlot $w={30}>
              <svg width="11" height="7" viewBox="0 0 11 7" fill="none"><path d="M0.5 6.5L5.5 1L10.5 6.5" stroke="#eee" strokeWidth="1.2" /></svg>
            </TaskSlot>
            <TaskSlot $w={23}>
              <svg width="14" height="10" viewBox="0 0 14 10" fill="none" stroke="#ddd"><rect x="3.5" y="2.5" width="10" height="6" fill="#ddd" /><path d="M1 0V3M3 0V3M0 3H4V5H2V7H3" /></svg>
            </TaskSlot>
            <TaskSlot $w={29}>
              <svg width="13" height="12" viewBox="0 0 13 12" fill="none" stroke="#aaa"><path d="M1 11C1 5 6 1 12 1M4 11C4 7 8 4 12 4M7 11C7 9 9 7 12 7" /><circle cx="11" cy="10.5" r="1" fill="#ddd" stroke="none" /></svg>
            </TaskSlot>
            <Clock>
              <span>12:06 PM</span>
              <span>5/13/2020</span>
            </Clock>
            <NotifySlot>
              <svg width="14" height="13" viewBox="0 0 14 13"><path d="M0 0H13V10H4L1 13V10H0Z" fill="#eee" /><path d="M2 3H11M2 5.5H11" stroke="#333" /></svg>
              <NotifyBadge>2</NotifyBadge>
            </NotifySlot>
          </Tray>
        </Taskbar>
      </PaintWindow>
      <Lower>
        <Dots>
          {Array.from({ length: 10 }).map((_, i) => (
            <Dot key={i} $on={i === 1} />
          ))}
        </Dots>
        <Caption>sekhar sir's screen</Caption>
      </Lower>
      <NavBar>
        <NavSquare />
        <NavHome><NavHomeCore /></NavHome>
        <NavBack viewBox="0 0 32 38"><path d="M30 2V36L2 19Z" fill="#666" stroke="#666" strokeWidth="2" strokeLinejoin="round" /></NavBack>
      </NavBar>
    </Page>
  );
}
